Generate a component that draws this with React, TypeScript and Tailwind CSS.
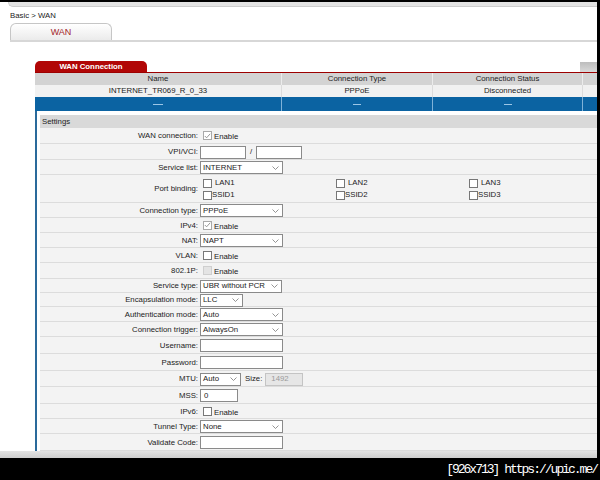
import React from "react";

function Chev() {
  return (
    <svg width="7" height="4" viewBox="0 0 7 4" className="shrink-0">
      <polyline points="0.5,0.5 3.5,3.5 6.5,0.5" fill="none" stroke="#7a7a7a" strokeWidth="0.8" />
    </svg>
  );
}

function Box({ checked, disabled }: { checked?: boolean; disabled?: boolean }) {
  if (disabled) {
    return <span className="w-[9px] h-[9px] shrink-0 border border-[#cfcfcf] bg-[#e4e4e4]" />;
  }
  return (
    <span
      className={`w-[9px] h-[9px] shrink-0 border bg-white flex items-center justify-center ${
        checked ? "border-[#a9a9a9]" : "border-[#777]"
      }`}
    >
      {checked && (
        <svg width="7" height="6" viewBox="0 0 7 6">
          <polyline points="0.8,3 2.6,4.8 6.2,0.8" fill="none" stroke="#8a8a8a" strokeWidth="0.9" />
        </svg>
      )}
    </span>
  );
}

function Enable({ checked, disabled }: { checked?: boolean; disabled?: boolean }) {
  return (
    <div className="flex items-center gap-[2px] pl-[3px]">
      <Box checked={checked} disabled={disabled} />
      <span className="pt-[2px]">Enable</span>
    </div>
  );
}

function Sel({ w, text }: { w: string; text: string }) {
  return (
    <div
      className={`${w} h-[13px] border border-[#8a8a8a] bg-white flex items-center justify-between pl-[2px] pr-[3px] text-[#1a1a1a]`}
    >
      <span>{text}</span>
      <Chev />
    </div>
  );
}

function Inp({ w, value, disabled }: { w: string; value?: string; disabled?: boolean }) {
  return (
    <div
      className={`${w} h-[13px] border flex items-center pl-[3px] ${
        disabled ? "border-[#c4c4c4] bg-[#e6e6e6] text-[#9a9a9a] pl-[5px]" : "border-[#8a8a8a] bg-white text-[#1a1a1a]"
      }`}
    >
      {value}
    </div>
  );
}

function Row({ h, label, children }: { h: string; label: string; children: React.ReactNode }) {
  return (
    <div className={`${h} flex items-center border-b border-[#dcdcdc] bg-[#f3f3f3]`}>
      <div className="w-[158px] shrink-0 text-right pt-px">{label}</div>
      <div className="pl-[2px] flex items-center pt-px">{children}</div>
    </div>
  );
}

function PortCell({ name, sm }: { name: string; sm?: boolean }) {
  return (
    <div className={`w-[133px] flex items-center ${sm ? "gap-0" : "gap-[3px]"}`}>
      <Box />
      <span>{name}</span>
    </div>
  );
}

export default function App() {
  return (
    <div className="w-[600px] h-[480px] bg-black flex flex-col overflow-hidden font-['Liberation_Sans',Arial,sans-serif] text-[7.8px] text-[#222] leading-none">
      <div className="h-[2px] shrink-0" />
      <div className="h-[456px] w-[597px] shrink-0 bg-white flex flex-col overflow-hidden">
        {/* top bar */}
        <div className="ml-[8px] h-[5px] shrink-0 bg-[#e3e3e3] rounded-bl-[5px] border-b border-l border-[#cdcdcd]" />
        <div className="h-[16px] shrink-0 pl-[10px] pt-[2px] flex items-center">Basic &gt; WAN</div>

        {/* page tab */}
        <div className="h-[19px] shrink-0 pl-[10px] flex flex-col">
          <div className="w-[102px] h-[17px] rounded-t-[6px] border border-b-0 border-[#c6c6c6] bg-gradient-to-b from-white to-[#ebebeb] flex items-center justify-center text-[9px] text-[#a3262a]">
            WAN
          </div>
          <div className="h-[2px] bg-[#d7d7d7]" />
        </div>

        <div className="h-[19px] shrink-0" />

        <div className="ml-[35px] flex-1 flex flex-col min-h-0">
          {/* WAN Connection tab */}
          <div className="h-[11px] shrink-0 flex justify-between items-end">
            <div className="w-[112px] h-[11px] rounded-t-[5px] bg-[#b10606] text-white font-bold flex items-center justify-center pt-[1px]">
              WAN Connection
            </div>
            <div className="w-[17px] h-[10px] bg-gradient-to-b from-[#bdbdbd] to-[#d9d9d9]" />
          </div>
          <div className="h-px shrink-0 bg-[#9c0000]" />

          {/* table */}
          <div className="h-[12px] shrink-0 flex bg-[#d3d3d3] text-[#222]">
            <div className="w-[247px] flex items-center justify-center border-r border-[#ececec]">Name</div>
            <div className="w-[151px] flex items-center justify-center border-r border-[#ececec]">Connection Type</div>
            <div className="w-[150px] flex items-center justify-center border-r border-[#ececec]">Connection Status</div>
            <div className="flex-1" />
          </div>
          <div className="h-[12px] shrink-0 flex bg-[#f1f1f1] text-[#1a1a1a]">
            <div className="w-[247px] flex items-center justify-center border-r border-[#dcdcdc]">INTERNET_TR069_R_0_33</div>
            <div className="w-[151px] flex items-center justify-center border-r border-[#dcdcdc]">PPPoE</div>
            <div className="w-[150px] flex items-center justify-center border-r border-[#dcdcdc]">Disconnected</div>
            <div className="flex-1" />
          </div>
          <div className="h-[14px] shrink-0 flex bg-[#0b63a2]">
            <div className="w-[247px] flex items-center justify-center border-r border-[#7fb2d8]">
              <span className="w-[10px] h-px bg-[#9cc6e6]" />
            </div>
            <div className="w-[151px] flex items-center justify-center border-r border-[#7fb2d8]">
              <span className="w-[8px] h-px bg-[#9cc6e6]" />
            </div>
            <div className="w-[150px] flex items-center justify-center border-r border-[#7fb2d8]">
              <span className="w-[8px] h-px bg-[#9cc6e6]" />
            </div>
            <div className="flex-1" />
          </div>

          {/* settings */}
          <div className="flex-1 min-h-0 border-l-2 border-[#2a6a9b] pl-[3px] pt-[4px] flex flex-col">
            <div className="h-[13px] shrink-0 bg-[#d9d9d9] pl-[2px] flex items-center">Settings</div>

            <Row h="h-[16px]" label="WAN connection:">
              <Enable checked />
            </Row>
            <Row h="h-[16px]" label="VPI/VCI:">
              <Inp w="w-[46px]" />
              <span className="px-[4px]">/</span>
              <Inp w="w-[46px]" />
            </Row>
            <Row h="h-[15px]" label="Service list:">
              <Sel w="w-[83px]" text="INTERNET" />
            </Row>
            <Row h="h-[28px]" label="Port binding:">
              <div className="flex flex-col gap-[3px] pl-[3px]">
                <div className="flex">
                  <PortCell name="LAN1" />
                  <PortCell name="LAN2" />
                  <PortCell name="LAN3" />
                </div>
                <div className="flex">
                  <PortCell name="SSID1" sm />
                  <PortCell name="SSID2" sm />
                  <PortCell name="SSID3" sm />
                </div>
              </div>
            </Row>
            <Row h="h-[15px]" label="Connection type:">
              <Sel w="w-[83px]" text="PPPoE" />
            </Row>
            <Row h="h-[15px]" label="IPv4:">
              <Enable checked />
            </Row>
            <Row h="h-[15px]" label="NAT:">
              <Sel w="w-[83px]" text="NAPT" />
            </Row>
            <Row h="h-[15px]" label="VLAN:">
              <Enable />
            </Row>
            <Row h="h-[16px]" label="802.1P:">
              <Enable disabled />
            </Row>
            <Row h="h-[14px]" label="Service type:">
              <Sel w="w-[82px]" text="UBR without PCR" />
            </Row>
            <Row h="h-[14px]" label="Encapsulation mode:">
              <Sel w="w-[43px]" text="LLC" />
            </Row>
            <Row h="h-[15px]" label="Authentication mode:">
              <Sel w="w-[83px]" text="Auto" />
            </Row>
            <Row h="h-[15px]" label="Connection trigger:">
              <Sel w="w-[83px]" text="AlwaysOn" />
            </Row>
            <Row h="h-[17px]" label="Username:">
              <Inp w="w-[83px]" />
            </Row>
            <Row h="h-[17px]" label="Password:">
              <Inp w="w-[83px]" />
            </Row>
            <Row h="h-[16px]" label="MTU:">
              <Sel w="w-[41px]" text="Auto" />
              <span className="pl-[4px] pr-[3px]">Size:</span>
              <Inp w="w-[38px]" value="1492" disabled />
            </Row>
            <Row h="h-[17px]" label="MSS:">
              <Inp w="w-[38px]" value="0" />
            </Row>
            <Row h="h-[15px]" label="IPv6:">
              <Enable />
            </Row>
            <Row h="h-[15px]" label="Tunnel Type:">
              <Sel w="w-[83px]" text="None" />
            </Row>
            <Row h="h-[17px]" label="Validate Code:">
              <Inp w="w-[83px]" />
            </Row>
          </div>
        </div>

        {/* footer strip */}
        <div className="h-[7px] shrink-0 bg-gradient-to-b from-[#e4e4e4] to-[#cfcfcf]" />
      </div>
      <div className="flex-1 flex items-center justify-end pr-[3px] text-white font-['Liberation_Mono',monospace] text-[13px] tracking-[-2px]">
        [926x713] https://upic.me/
      </div>
    </div>
  );
}
